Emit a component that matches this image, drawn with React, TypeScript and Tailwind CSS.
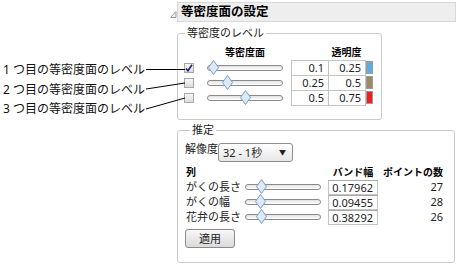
import React from "react";

const font = "font-['Noto_Sans','Noto_Sans_CJK_JP',sans-serif]";

const Checkbox: React.FC<{ checked?: boolean }> = ({ checked }) => (
  <div className="w-[10px] h-[10px] border border-[#a8a8a8] bg-gradient-to-b from-[#f7f7f7] to-[#dcdcdc] flex items-center justify-center">
    {checked && (
      <svg width="8" height="8" viewBox="0 0 8 8">
        <path d="M1 4.5 L3 6.8 L7 0.8" stroke="#23237a" strokeWidth="1.6" fill="none" />
      </svg>
    )}
  </div>
);

const Slider: React.FC<{ pos: number }> = ({ pos }) => (
  <div className="relative w-[76px] h-[14px] flex items-center">
    <div className="w-full h-[6px] rounded-full border border-[#8a8a8a] bg-gradient-to-b from-[#e2e2e2] to-white" />
    <svg
      width="11"
      height="15"
      viewBox="0 0 11 15"
      className="absolute top-[-1px]"
      style={{ left: pos - 5 }}
    >
      <path d="M5.5 0.5 L10.5 7.5 L5.5 14.5 L0.5 7.5 Z" fill="#dce9f7" stroke="#7b9cc8" />
    </svg>
  </div>
);

const levels = [
  { on: true, pos: 6, a: "0.1", b: "0.25", color: "bg-[#5aaee2]" },
  { on: false, pos: 20, a: "0.25", b: "0.5", color: "bg-[#998b68]" },
  { on: false, pos: 38, a: "0.5", b: "0.75", color: "bg-[#e82222]" },
];

const cols = [
  { name: "がくの長さ", pos: 16, bw: "0.17962", n: 27 },
  { name: "がくの幅", pos: 15, bw: "0.09455", n: 28 },
  { name: "花弁の長さ", pos: 16, bw: "0.38292", n: 26 },
];

export default function App() {
  return (
    <div className={`relative w-[460px] h-[265px] bg-white flex text-black ${font}`}>
      {/* callout labels */}
      <div className="w-[170px] shrink-0 flex flex-col pt-[60px] pl-[3px] text-[12px] leading-[19.5px] text-[#111]">
        <div>1 つ目の等密度面のレベル</div>
        <div>2 つ目の等密度面のレベル</div>
        <div>3 つ目の等密度面のレベル</div>
      </div>

      {/* panel */}
      <div className="flex flex-col pt-[2px]">
        <div className="flex items-center">
          <svg width="7" height="20" viewBox="0 0 7 20">
            <path d="M6 9.5 L6 15.5 L0.5 15.5 Z" fill="#f2f2f2" stroke="#9a9a9a" />
          </svg>
          <div className="w-[279px] h-[20px] bg-[#eeeeee] border border-[#d8d8d8] pl-[3px] text-[12.5px] leading-[18px] font-bold">
            等密度面の設定
          </div>
        </div>

        <div className="pl-[7px] flex flex-col">
          {/* levels group */}
          <fieldset className="mt-[4px] w-[205px] border border-[#cacaca] rounded-[3px] pl-[6px] pb-[13px]">
            <legend className="ml-[1px] px-[2px] text-[11px] leading-[14px] text-[#222]">等密度のレベル</legend>
            <div className="flex h-[16px] mt-[4px] items-center text-[10px] font-bold">
              <div className="w-[23px]" />
              <div className="w-[76px] text-center">等密度面</div>
              <div className="w-[45px]" />
              <div className="w-[37px] text-center">透明度</div>
            </div>
            <div className="flex">
              <div className="flex flex-col">
                {levels.map((l, i) => (
                  <div key={i} className="flex items-center h-[15px]">
                    <Checkbox checked={l.on} />
                    <div className="ml-[13px]">
                      <Slider pos={l.pos} />
                    </div>
                  </div>
                ))}
              </div>
              <div className="ml-[8px] flex flex-col border-t border-l border-[#c4c4c4]">
                {levels.map((l, i) => (
                  <div key={i} className="flex h-[15px] text-[11px] leading-[14px] text-[#222]">
                    <div className="w-[37px] border-r border-b border-[#c4c4c4] text-right pr-[4px]">{l.a}</div>
                    <div className="w-[37px] border-r border-b border-[#c4c4c4] text-right pr-[4px]">{l.b}</div>
                  </div>
                ))}
              </div>
              <div className="flex flex-col pt-[1px] gap-[2px]">
                {levels.map((l, i) => (
                  <div key={i} className={`w-[7px] h-[13px] border border-[#9a9a9a] ${l.color}`} />
                ))}
              </div>
            </div>
          </fieldset>

          {/* estimation group */}
          <fieldset className="mt-[3px] w-[278px] border border-[#cacaca] rounded-[3px] pl-[7px] pb-[13px]">
            <legend className="ml-[5px] px-[2px] text-[11px] leading-[14px] text-[#222]">推定</legend>
            <div className="flex items-start mt-[6px] text-[11px] text-[#222]">
              <div className="w-[33px] leading-[12px]">解像度</div>
              <div className="w-[75px] h-[19px] rounded-[3px] border border-[#8e8e8e] bg-gradient-to-b from-white to-[#e6e6e6] flex items-center justify-between pl-[4px] pr-[6px] leading-[14px]">
                <span>32 - 1秒</span>
                <span className="text-[7px]">▼</span>
              </div>
            </div>
            <div className="flex h-[14px] mt-[3px] items-center text-[10px] font-bold leading-[14px]">
              <div className="w-[143px] pl-[1px]">列</div>
              <div className="w-[50px] text-center">バンド幅</div>
              <div className="w-[65px] text-right">ポイントの数</div>
            </div>
            <div className="flex flex-col mt-[1px] gap-[1px]">
              {cols.map((c, i) => (
                <div key={i} className="flex items-center h-[14px] text-[11px] leading-[14px] text-[#222]">
                  <div className="w-[60px] pl-[1px]">{c.name}</div>
                  <Slider pos={c.pos} />
                  <div className="ml-[7px] w-[50px] h-[15px] border border-[#c4c4c4] border-t-[#a8a8a8] text-right pr-[4px] leading-[13px]">
                    {c.bw}
                  </div>
                  <div className="w-[65px] text-right">{c.n}</div>
                </div>
              ))}
            </div>
            <button className="mt-[5px] w-[50px] h-[19px] rounded-[3px] border border-[#8a8a8a] bg-gradient-to-b from-[#f8f8f8] to-[#dadada] text-[11px] leading-[14px] text-[#222]">
              適用
            </button>
          </fieldset>
        </div>
      </div>

      {/* callout lines */}
      <svg className="absolute left-0 top-0 pointer-events-none" width="460" height="265">
        <line x1="146" y1="69.5" x2="185" y2="69.5" stroke="#000" strokeWidth="1" />
        <line x1="146" y1="89" x2="185" y2="83" stroke="#000" strokeWidth="1" />
        <line x1="146" y1="109" x2="185" y2="98" stroke="#000" strokeWidth="1" />
      </svg>
    </div>
  );
}
